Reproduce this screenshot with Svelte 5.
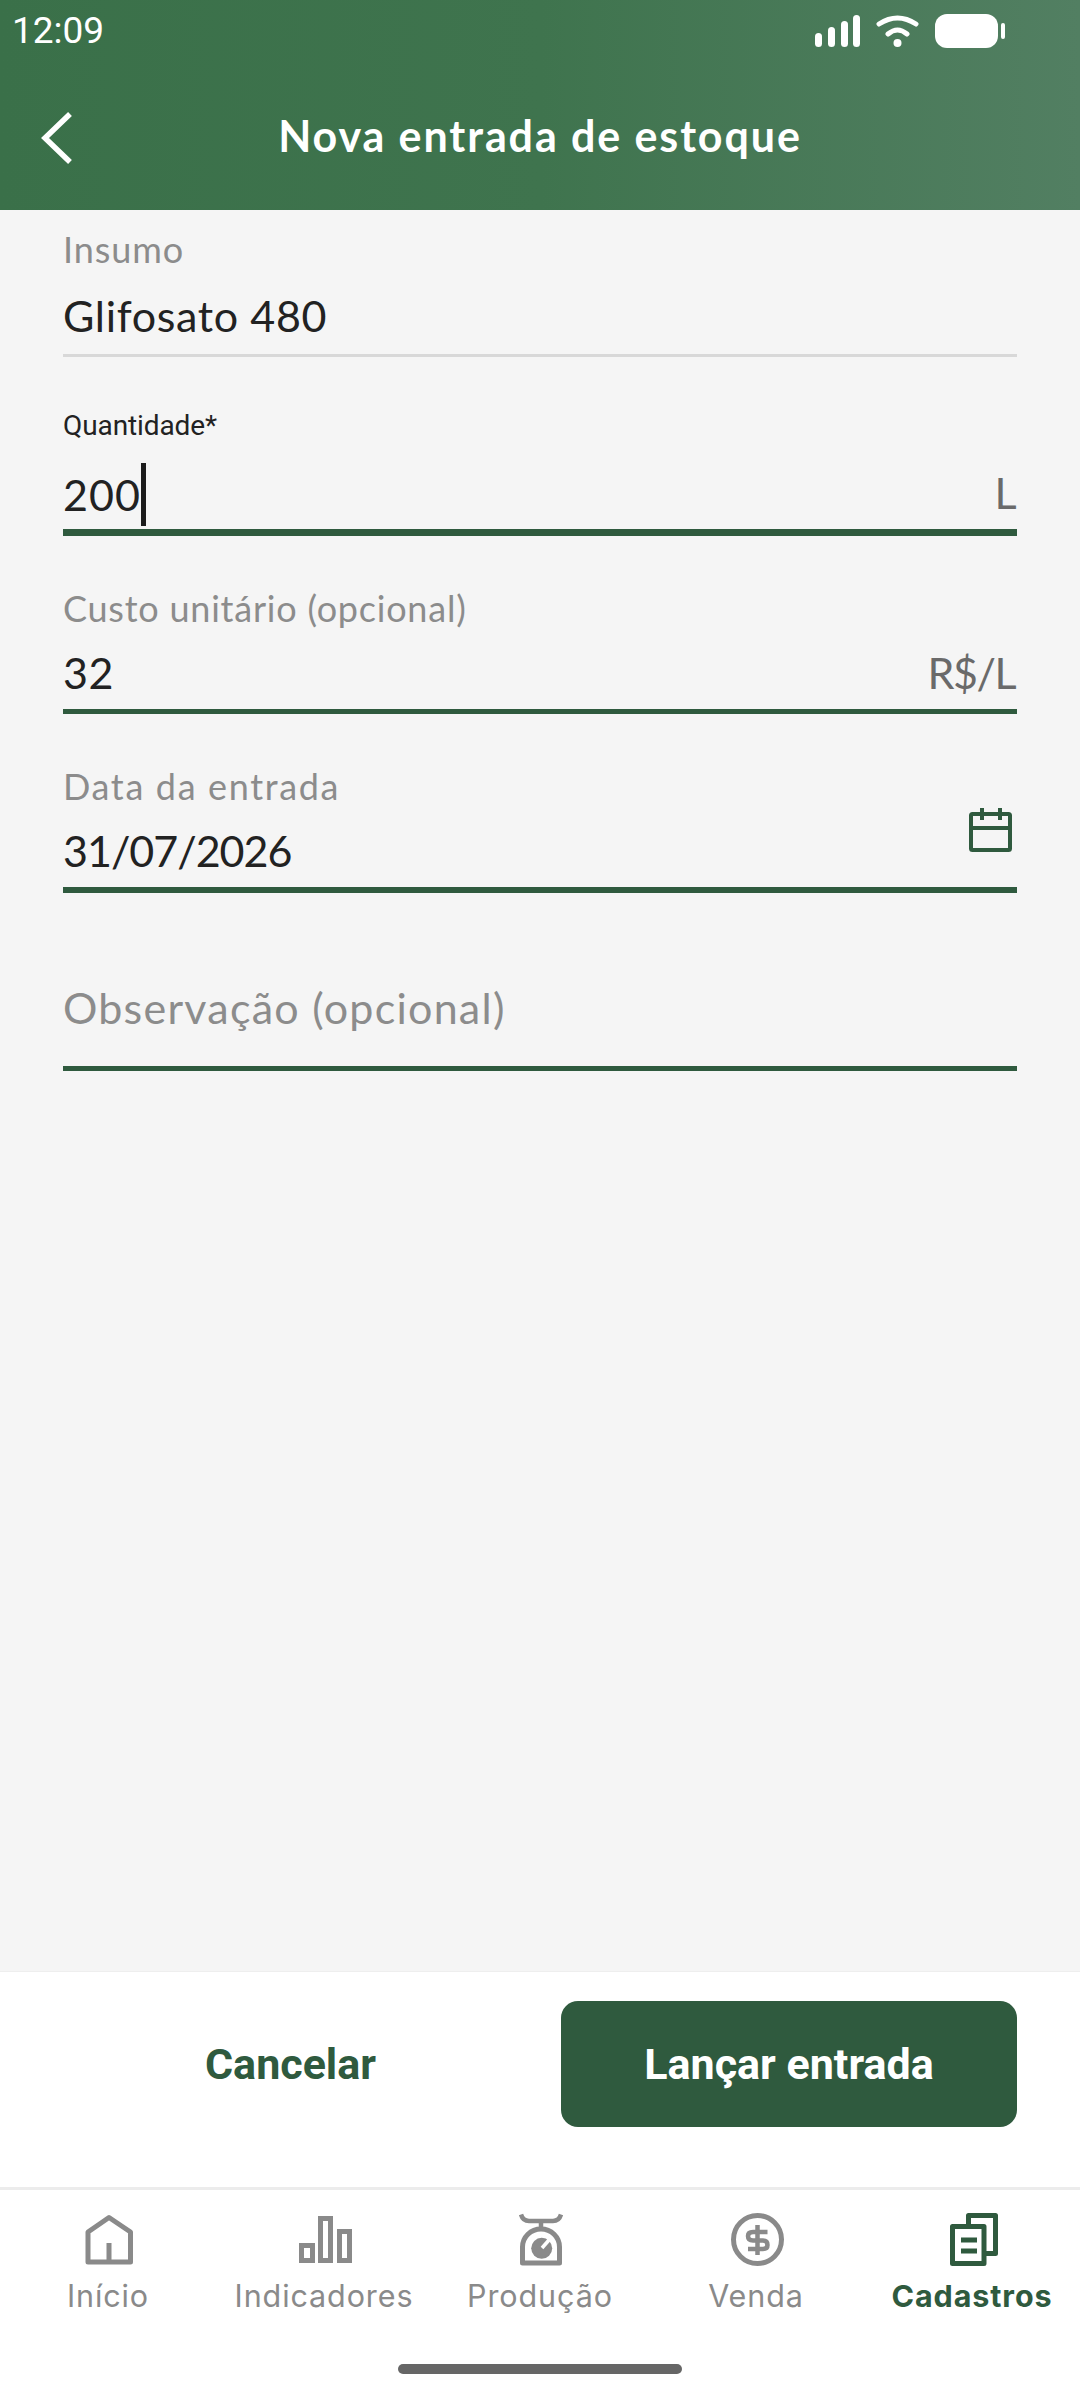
<script>
  const fields = [
    { label: 'Quantidade*', value: '200', suffix: 'L', focus: true, cls: 'qty' },
    { label: 'Custo unitário (opcional)', value: '32', suffix: 'R$/L', cls: 'cost' },
    { label: 'Data da entrada', value: '31/07/2026', date: true, cls: 'date' }
  ];
</script>

<div class="screen">
  <header class="top">
    <div class="status">
      <span class="clock">12:09</span>
      <svg class="sys" width="190" height="40" viewBox="0 0 190 40" fill="#fff">
        <rect x="0" y="23" width="7" height="14" rx="3.5"/>
        <rect x="13" y="17" width="7" height="20" rx="3.5"/>
        <rect x="26" y="11" width="7" height="26" rx="3.5"/>
        <rect x="38" y="5" width="7" height="32" rx="3.5"/>
        <path d="M64 14Q82.5 2 101 14M73 24Q82.5 16 92 24" fill="none" stroke="#fff" stroke-width="5" stroke-linecap="round"/>
        <circle cx="82.5" cy="33" r="4"/>
        <rect x="120" y="4" width="63" height="34" rx="12"/>
        <rect x="186" y="13" width="4" height="16" rx="2"/>
      </svg>
    </div>
    <div class="bar">
      <svg class="back" width="36" height="54" viewBox="0 0 36 54" fill="none" stroke="#fff" stroke-width="5.5">
        <path d="M32 3 L7 27 L32 51"/>
      </svg>
      <h1>Nova entrada de estoque</h1>
    </div>
  </header>

  <main class="form">
    <div class="field first">
      <span class="label">Insumo</span>
      <span class="value">Glifosato 480</span>
    </div>
    {#each fields as f}
      <div class="field {f.cls}">
        <span class="label">{f.label}</span>
        <div class="row">
          <span class="value">{f.value}{#if f.focus}<i class="caret"></i>{/if}</span>
          {#if f.suffix}<span class="suffix">{f.suffix}</span>{/if}
          {#if f.date}
            <svg class="cal" width="44" height="44" viewBox="0 0 44 44" fill="none" stroke="#2f5a3e" stroke-width="4">
              <rect x="2" y="6" width="39" height="36" rx="1.5"/>
              <path d="M2 20H41M13 0V12M31 0V12"/>
            </svg>
          {/if}
        </div>
      </div>
    {/each}
    <div class="field obs">
      <span class="ph">Observação (opcional)</span>
    </div>
  </main>

  <div class="actions">
    <button class="cancel">Cancelar</button>
    <button class="submit">Lançar entrada</button>
  </div>

  <nav class="tabs">
    <div class="tab">
      <svg width="50" height="54" viewBox="0 0 50 54" fill="none" stroke="#8a8a8a" stroke-width="5" stroke-linejoin="round">
        <path d="M5 19 L26 4.5 L47.5 19 V49 H5 Z M26 49 V30"/>
      </svg>
      <span>Início</span>
    </div>
    <div class="tab">
      <svg width="56" height="54" viewBox="0 0 56 54" fill="none" stroke="#8a8a8a" stroke-width="5">
        <rect x="5.5" y="32.5" width="11" height="15"/>
        <rect x="24.5" y="5.5" width="10" height="42"/>
        <rect x="43.5" y="18.5" width="10" height="29"/>
      </svg>
      <span>Indicadores</span>
    </div>
    <div class="tab">
      <svg width="50" height="54" viewBox="0 0 50 54" fill="none" stroke="#8a8a8a" stroke-width="5" stroke-linejoin="round">
        <path d="M6 1.5 Q8 8 14 8 H38 Q44 8 46 1.5 M26 8 V16" stroke-width="4.5"/>
        <path d="M7.5 50 V34 A18.5 18 0 0 1 44.5 34 V50 Z"/>
        <circle cx="26.7" cy="35.3" r="10.5" fill="#8a8a8a" stroke="none"/>
        <path d="M27 35 L34 27" stroke="#fff" stroke-width="3.5"/>
      </svg>
      <span>Produção</span>
    </div>
    <div class="tab">
      <svg width="56" height="54" viewBox="0 0 56 54" fill="none" stroke="#8a8a8a" stroke-width="5">
        <circle cx="29.5" cy="26.5" r="24"/>
        <path d="M39.5 19 H25 Q20 19 20 23 Q20 27.5 25 27.5 H35 Q39.5 27.5 39.5 32 Q39.5 36 35 36 H20 M29.5 12 V42" stroke-width="4.5"/>
      </svg>
      <span>Venda</span>
    </div>
    <div class="tab active">
      <svg width="54" height="54" viewBox="0 0 54 54" fill="none" stroke="#2f5a3e" stroke-width="5" stroke-linejoin="round">
        <path d="M23.5 11 V2.5 H50.5 V40.5 H41"/>
        <rect x="7.5" y="13.5" width="31.5" height="37"/>
        <path d="M16 27 H32 M16 38 H32"/>
      </svg>
      <span>Cadastros</span>
    </div>
  </nav>
  <div class="home"><i></i></div>
</div>

<style>
  :global(body) {
    margin: 0;
    background: #f5f5f5;
  }
  .screen {
    width: 1080px;
    height: 2400px;
    display: flex;
    flex-direction: column;
    background: #f5f5f5;
    font-family: Lato, "Noto Sans", sans-serif;
    overflow: hidden;
  }
  .top {
    height: 210px;
    flex: none;
    background: linear-gradient(90deg, #3a7049 0%, #3f744e 50%, #527f62 100%);
    color: #fff;
  }
  .status {
    height: 60px;
    display: flex;
    align-items: center;
    justify-content: space-between;
    padding: 0 75px 0 12px;
  }
  .clock {
    font-family: Roboto, sans-serif;
    font-size: 37px;
  }
  .bar {
    height: 150px;
    position: relative;
    display: flex;
    align-items: center;
    justify-content: center;
  }
  .back {
    position: absolute;
    left: 38px;
    top: 51px;
  }
  h1 {
    margin: 0;
    font-size: 43px;
    font-weight: 700;
    letter-spacing: 1.9px;
  }
  .form {
    flex: 1;
    padding: 17px 63px 0;
    display: flex;
    flex-direction: column;
    gap: 50px;
  }
  .field {
    display: flex;
    flex-direction: column;
    box-sizing: border-box;
    border-bottom: 5px solid #2f5a3e;
  }
  .first {
    height: 130px;
    border-bottom: 3px solid #d8d8d8;
  }
  .qty {
    height: 129px;
    border-bottom-width: 7px;
  }
  .cost {
    height: 128px;
  }
  .date {
    height: 129px;
    border-bottom-width: 6px;
  }
  .obs {
    height: 128px;
    padding-top: 35px;
  }
  .label {
    font-size: 36px;
    line-height: 44px;
    color: #8c8c8c;
    letter-spacing: 0.9px;
  }
  .cost .label {
    letter-spacing: 0.77px;
  }
  .date .label {
    letter-spacing: 1.65px;
  }
  .qty .label {
    font-family: Roboto, sans-serif;
    font-size: 28px;
    line-height: 38px;
    color: #222;
    letter-spacing: -0.1px;
  }
  .row {
    display: flex;
    justify-content: space-between;
    align-items: flex-start;
  }
  .value {
    font-size: 43px;
    line-height: 60px;
    color: #222;
    letter-spacing: 0.65px;
    margin-top: 13px;
    display: inline-flex;
    align-items: center;
  }
  .first .value {
    margin-top: 15px;
  }
  .qty .value {
    margin-top: 18px;
    letter-spacing: 1px;
  }
  .date .value {
    letter-spacing: -1px;
  }
  .caret {
    display: block;
    width: 5px;
    height: 63px;
    margin-left: 0;
    background: #1c1c1c;
  }
  .suffix {
    font-size: 43px;
    line-height: 60px;
    color: #6a6a6a;
    margin: 13px 2px 0 0;
    letter-spacing: -1.5px;
  }
  .qty .suffix {
    margin-top: 18px;
  }
  .cal {
    margin: 0 4px 0 0;
  }
  .ph {
    font-size: 43px;
    line-height: 60px;
    color: #8c8c8c;
    letter-spacing: 1.25px;
  }
  .actions {
    height: 216px;
    flex: none;
    box-sizing: border-box;
    background: #fff;
    border-top: 1px solid #eee;
    display: flex;
    align-items: flex-start;
    padding: 29px 63px 0 0;
  }
  button {
    border: 0;
    font-family: Roboto, sans-serif;
    font-weight: 700;
    font-size: 43px;
    cursor: pointer;
  }
  .cancel {
    width: 561px;
    height: 126px;
    background: none;
    color: #2f5a3e;
    padding-left: 26px;
  }
  .submit {
    width: 456px;
    height: 126px;
    background: #2f5a3e;
    color: #fff;
    border-radius: 17px;
  }
  .tabs {
    height: 153px;
    flex: none;
    box-sizing: border-box;
    background: #fff;
    border-top: 3px solid #ececec;
    display: grid;
    grid-template-columns: repeat(5, 1fr);
    padding-top: 23px;
    font-family: Inter, sans-serif;
  }
  .tab {
    display: flex;
    flex-direction: column;
    align-items: center;
    color: #8a8a8a;
    font-size: 30.5px;
    letter-spacing: 0.9px;
    gap: 10px;
  }
  .active {
    color: #2f5a3e;
    font-weight: 700;
  }
  .home {
    height: 60px;
    flex: none;
    background: #fff;
    display: flex;
    justify-content: center;
    padding-top: 24px;
    box-sizing: border-box;
  }
  .home i {
    display: block;
    width: 284px;
    height: 10px;
    border-radius: 5px;
    background: #666;
  }
</style>
